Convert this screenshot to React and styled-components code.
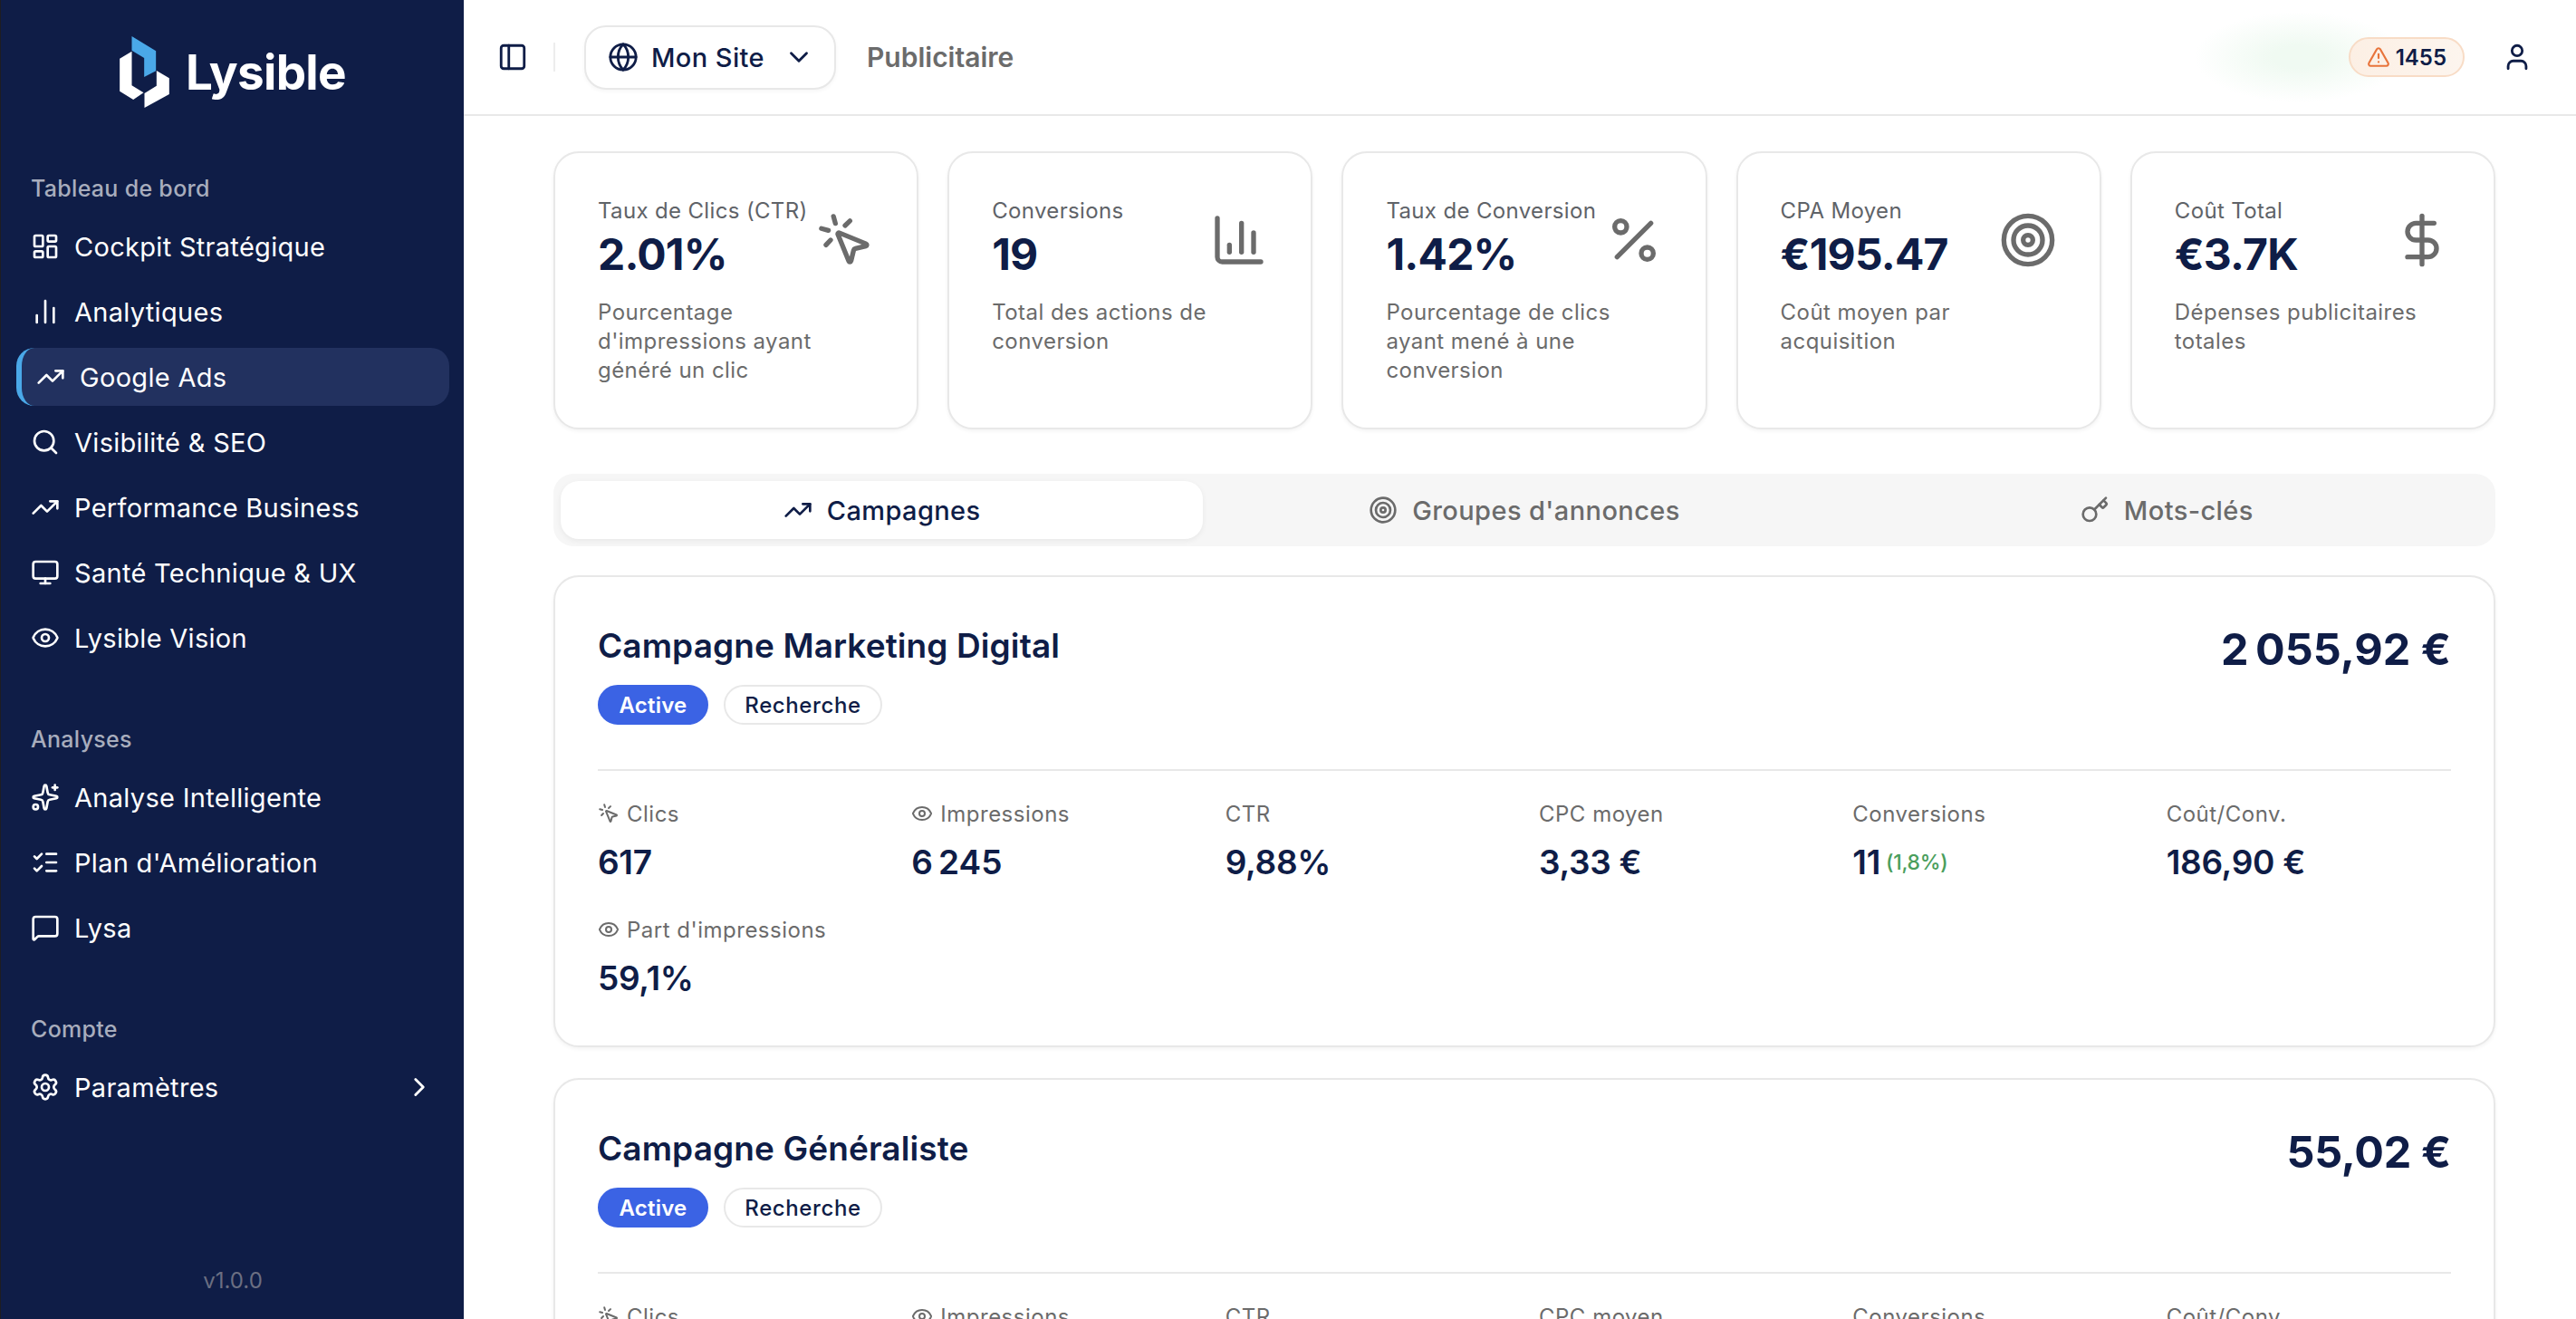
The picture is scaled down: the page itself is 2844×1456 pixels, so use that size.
import React from "react";
import styled, { createGlobalStyle } from "styled-components";
import {
  LayoutDashboard, ChartNoAxesColumn, TrendingUp, Search, Monitor, Eye, Sparkles, ListChecks,
  MessageSquare, Settings, ChevronRight, ChevronDown, Globe, PanelLeft, TriangleAlert, User,
  MousePointerClick, ChartColumn, Percent, Target, DollarSign, Key,
} from "lucide-react";

const navy = "#0f1d47";
const grey = "#6b6b6b";
const line = "#e8e8e8";

const GlobalStyle = createGlobalStyle`
  * { box-sizing: border-box; }
  html, body { margin: 0; height: 100%; overflow: hidden; background: #fff; }
  body { font-family: Inter, "Liberation Sans", sans-serif; color: ${navy}; }
`;

const Page = styled.div`
  display: flex;
  height: 100vh;
  overflow: hidden;
`;

const Sidebar = styled.aside`
  flex: 0 0 512px;
  display: flex;
  flex-direction: column;
  height: 100%;
  padding: 41px 16px 26px 17px;
  background: ${navy};
  border-left: 1px solid #1d1d22;
`;

const Logo = styled.div`
  display: flex;
  align-items: center;
  justify-content: center;
  gap: 18px;
  height: 77px;
  margin-bottom: 70px;
  color: #fff;
  font-size: 53px;
  font-weight: 700;
  letter-spacing: -0.7px;
`;

const NavSection = styled.nav`
  & + & { margin-top: 60px; }
`;

const SectionLabel = styled.div`
  height: 40px;
  margin-bottom: 12px;
  padding-left: 16px;
  font-size: 25px;
  font-weight: 500;
  line-height: 40px;
  letter-spacing: 0.3px;
  color: #a8adbd;
`;

const NavList = styled.div`
  display: flex;
  flex-direction: column;
  gap: 8px;
`;

const NavItem = styled.a`
  display: flex;
  align-items: center;
  gap: 16px;
  height: 64px;
  padding-left: 16px;
  border-radius: 20px;
  font-size: 29px;
  letter-spacing: 0.3px;
  color: #fff;
  background: ${(p) => (p.$active ? "#22315f" : "transparent")};
  border-left: ${(p) => (p.$active ? "6px solid #4aa8e8" : "0")};
  svg { flex-shrink: 0; }
`;

const NavChevron = styled(ChevronRight)`
  margin-left: auto;
  margin-right: 16px;
`;

const Version = styled.div`
  margin-top: auto;
  text-align: center;
  font-size: 24px;
  line-height: 32px;
  color: #6b6f82;
`;

const Main = styled.div`
  flex: 1;
  min-width: 0;
  height: 100%;
  display: flex;
  flex-direction: column;
`;

const Header = styled.header`
  position: relative;
  flex: 0 0 128px;
  display: flex;
  align-items: center;
  padding: 0 48px 0 37px;
  border-bottom: 2px solid ${line};
`;

const Separator = styled.span`
  width: 2px;
  height: 32px;
  margin: 0 32px 0 28px;
  background: #ededed;
`;

const SiteSelect = styled.button`
  display: flex;
  align-items: center;
  width: 278px;
  height: 71px;
  padding: 0 22px 0 24px;
  border: 2px solid ${line};
  border-radius: 24px;
  background: #fff;
  box-shadow: 0 2px 4px rgba(0, 0, 0, 0.04);
  font-family: inherit;
  font-size: 29px;
  font-weight: 500;
  letter-spacing: 0.4px;
  color: ${navy};
  span { margin-left: 14px; }
  svg:last-child { margin-left: auto; }
`;

const Crumb = styled.div`
  margin-left: 34px;
  font-size: 30px;
  font-weight: 600;
  color: ${grey};
`;

const HeaderRight = styled.div`
  margin-left: auto;
  display: flex;
  align-items: center;
  gap: 41px;
`;

const BlurSpot = styled.div`
  position: absolute;
  left: 1911px;
  top: 13px;
  width: 230px;
  height: 100px;
  background: radial-gradient(closest-side, #f0faf2 25%, rgba(240, 250, 242, 0));
  pointer-events: none;
`;

const AlertPill = styled.div`
  position: relative;
  display: flex;
  align-items: center;
  gap: 6px;
  height: 44px;
  padding: 0 18px;
  border: 2px solid #f8dcc6;
  border-radius: 22px;
  background: linear-gradient(90deg, #fcefe4, #fdf5ee);
  font-size: 24px;
  font-weight: 600;
  color: ${navy};
`;

const Content = styled.main`
  flex: 1;
  min-height: 0;
  overflow: hidden;
  padding: 39px 89px 0 99px;
`;

const StatGrid = styled.section`
  display: grid;
  grid-template-columns: repeat(5, 1fr);
  gap: 32px;
`;

const StatCard = styled.div`
  padding: 48px 47px 47px;
  border: 2px solid ${line};
  border-radius: 28px;
  background: #fff;
  box-shadow: 0 2px 4px rgba(0, 0, 0, 0.05);
`;

const StatTop = styled.div`
  display: flex;
  align-items: center;
  justify-content: space-between;
  svg { flex-shrink: 0; color: ${grey}; }
`;

const StatTitle = styled.div`
  font-size: 24px;
  line-height: 32px;
  letter-spacing: 0.35px;
  white-space: nowrap;
  color: #5f6368;
`;

const StatValue = styled.div`
  font-size: 48px;
  font-weight: 700;
  line-height: 64px;
  letter-spacing: -0.8px;
  color: ${navy};
`;

const StatDesc = styled.p`
  margin: 16px 0 0;
  font-size: 24px;
  line-height: 32px;
  letter-spacing: 0.45px;
  color: ${grey};
`;

const Tabs = styled.div`
  display: grid;
  grid-template-columns: repeat(3, 1fr);
  height: 80px;
  margin-top: 49px;
  padding: 8px;
  border-radius: 22px;
  background: #f6f6f6;
`;

const Tab = styled.div`
  display: flex;
  align-items: center;
  justify-content: center;
  gap: 16px;
  border-radius: 20px;
  font-size: 29px;
  font-weight: 500;
  letter-spacing: 0.4px;
  color: ${(p) => (p.$active ? navy : grey)};
  background: ${(p) => (p.$active ? "#fff" : "transparent")};
  box-shadow: ${(p) => (p.$active ? "0 2px 6px rgba(0, 0, 0, 0.06)" : "none")};
`;

const Campaigns = styled.section`
  display: flex;
  flex-direction: column;
  gap: 34px;
  margin-top: 32px;
`;

const CampaignCard = styled.article`
  padding: 48px 47px 51px;
  border: 2px solid ${line};
  border-radius: 28px;
  background: #fff;
  box-shadow: 0 2px 4px rgba(0, 0, 0, 0.05);
`;

const CampaignTop = styled.div`
  display: flex;
  justify-content: space-between;
  align-items: flex-start;
`;

const CampaignName = styled.h2`
  margin: 0;
  font-size: 37px;
  font-weight: 600;
  line-height: 56px;
  letter-spacing: 0.1px;
  color: ${navy};
`;

const Badges = styled.div`
  display: flex;
  gap: 17px;
  margin-top: 15px;
`;

const Badge = styled.span`
  display: flex;
  align-items: center;
  justify-content: center;
  width: ${(p) => (p.$filled ? 122 : 175)}px;
  height: 44px;
  border-radius: 22px;
  border: 2px solid ${(p) => (p.$filled ? "#3b63e4" : line)};
  background: ${(p) => (p.$filled ? "#3b63e4" : "#fff")};
  color: ${(p) => (p.$filled ? "#fff" : navy)};
  font-size: 24px;
  font-weight: ${(p) => (p.$filled ? 600 : 500)};
  letter-spacing: ${(p) => (p.$filled ? 0.2 : 0.6)}px;
`;

const Price = styled.div`
  margin-top: 1px;
  font-size: 48.5px;
  font-weight: 700;
  line-height: 62px;
  letter-spacing: -0.3px;
  color: ${navy};
`;

const Metrics = styled.div`
  display: grid;
  grid-template-columns: repeat(6, 1fr);
  gap: 35px 32px;
  margin-top: 49px;
  padding-top: 31px;
  border-top: 2px solid ${line};
`;

const MetricLabel = styled.div`
  display: flex;
  align-items: center;
  gap: 8px;
  height: 32px;
  font-size: 24px;
  letter-spacing: 0.5px;
  color: ${grey};
`;

const MetricValue = styled.div`
  display: flex;
  align-items: center;
  gap: 6px;
  height: 47px;
  margin-top: 14px;
  font-size: 37px;
  font-weight: 600;
  line-height: 48px;
  letter-spacing: -0.3px;
  color: ${navy};
`;

const MetricNote = styled.span`
  font-size: 23px;
  font-weight: 500;
  color: #4a9e5c;
`;

const navGroups = [
  {
    label: "Tableau de bord",
    items: [
      { icon: LayoutDashboard, text: "Cockpit Stratégique" },
      { icon: ChartNoAxesColumn, text: "Analytiques" },
      { icon: TrendingUp, text: "Google Ads", active: true },
      { icon: Search, text: "Visibilité & SEO" },
      { icon: TrendingUp, text: "Performance Business" },
      { icon: Monitor, text: "Santé Technique & UX" },
      { icon: Eye, text: "Lysible Vision" },
    ],
  },
  {
    label: "Analyses",
    items: [
      { icon: Sparkles, text: "Analyse Intelligente" },
      { icon: ListChecks, text: "Plan d'Amélioration" },
      { icon: MessageSquare, text: "Lysa" },
    ],
  },
  {
    label: "Compte",
    items: [{ icon: Settings, text: "Paramètres", more: true }],
  },
];

const stats = [
  { title: "Taux de Clics (CTR)", value: "2.01%", desc: "Pourcentage d'impressions ayant généré un clic", icon: MousePointerClick },
  { title: "Conversions", value: "19", desc: "Total des actions de conversion", icon: ChartColumn },
  { title: "Taux de Conversion", value: "1.42%", desc: "Pourcentage de clics ayant mené à une conversion", icon: Percent },
  { title: "CPA Moyen", value: "€195.47", desc: "Coût moyen par acquisition", icon: Target },
  { title: "Coût Total", value: "€3.7K", desc: "Dépenses publicitaires totales", icon: DollarSign },
];

const campaigns = [
  {
    name: "Campagne Marketing Digital",
    price: "2\u202f055,92\u00a0€",
    metrics: [
      { label: "Clics", icon: MousePointerClick, value: "617" },
      { label: "Impressions", icon: Eye, value: "6\u202f245" },
      { label: "CTR", value: "9,88%" },
      { label: "CPC moyen", value: "3,33\u00a0€" },
      { label: "Conversions", value: "11", note: "(1,8%)" },
      { label: "Coût/Conv.", value: "186,90\u00a0€" },
      { label: "Part d'impressions", icon: Eye, value: "59,1%" },
    ],
  },
  {
    name: "Campagne Généraliste",
    price: "55,02\u00a0€",
    metrics: [
      { label: "Clics", icon: MousePointerClick },
      { label: "Impressions", icon: Eye },
      { label: "CTR" },
      { label: "CPC moyen" },
      { label: "Conversions" },
      { label: "Coût/Conv." },
    ],
  },
];

function LogoMark() {
  return (
    <svg width="55" height="79" viewBox="43 33 164 237">
      <polygon fill="#4aa8e8" points="83,33 163,82 163,148 124,168 124,105 83,80" />
      <polygon fill="#fff" points="83,83 43,107 43,215 88,243 122,220 83,196" />
      <polygon fill="#fff" points="165,147 207,172 207,225 125,270 125,222 165,197" />
    </svg>
  );
}

function App() {
  return (
    <Page>
      <GlobalStyle />
      <Sidebar>
        <Logo>
          <LogoMark />
          Lysible
        </Logo>
        {navGroups.map((group) => (
          <NavSection key={group.label}>
            <SectionLabel>{group.label}</SectionLabel>
            <NavList>
              {group.items.map(({ icon: Icon, text, active, more }) => (
                <NavItem key={text} $active={active}>
                  <Icon size={32} strokeWidth={2} />
                  {text}
                  {more && <NavChevron size={34} />}
                </NavItem>
              ))}
            </NavList>
          </NavSection>
        ))}
        <Version>v1.0.0</Version>
      </Sidebar>

      <Main>
        <Header>
          <PanelLeft size={34} color={navy} strokeWidth={2} />
          <Separator />
          <SiteSelect>
            <Globe size={34} />
            <span>Mon Site</span>
            <ChevronDown size={34} />
          </SiteSelect>
          <Crumb>Publicitaire</Crumb>
          <BlurSpot />
          <HeaderRight>
            <AlertPill>
              <TriangleAlert size={26} color="#e8743b" strokeWidth={2} />
              1455
            </AlertPill>
            <User size={34} color={navy} strokeWidth={2} />
          </HeaderRight>
        </Header>

        <Content>
          <StatGrid>
            {stats.map(({ title, value, desc, icon: Icon }) => (
              <StatCard key={title}>
                <StatTop>
                  <div>
                    <StatTitle>{title}</StatTitle>
                    <StatValue>{value}</StatValue>
                  </div>
                  <Icon size={64} strokeWidth={2} />
                </StatTop>
                <StatDesc>{desc}</StatDesc>
              </StatCard>
            ))}
          </StatGrid>

          <Tabs>
            <Tab $active>
              <TrendingUp size={32} />
              Campagnes
            </Tab>
            <Tab>
              <Target size={32} />
              Groupes d'annonces
            </Tab>
            <Tab>
              <Key size={32} />
              Mots-clés
            </Tab>
          </Tabs>

          <Campaigns>
            {campaigns.map((c) => (
              <CampaignCard key={c.name}>
                <CampaignTop>
                  <div>
                    <CampaignName>{c.name}</CampaignName>
                    <Badges>
                      <Badge $filled>Active</Badge>
                      <Badge>Recherche</Badge>
                    </Badges>
                  </div>
                  <Price>{c.price}</Price>
                </CampaignTop>
                <Metrics>
                  {c.metrics.map(({ label, icon: Icon, value, note }) => (
                    <div key={label}>
                      <MetricLabel>
                        {Icon && <Icon size={24} strokeWidth={2} />}
                        {label}
                      </MetricLabel>
                      {value && (
                        <MetricValue>
                          {value}
                          {note && <MetricNote>{note}</MetricNote>}
                        </MetricValue>
                      )}
                    </div>
                  ))}
                </Metrics>
              </CampaignCard>
            ))}
          </Campaigns>
        </Content>
      </Main>
    </Page>
  );
}

export default App;
